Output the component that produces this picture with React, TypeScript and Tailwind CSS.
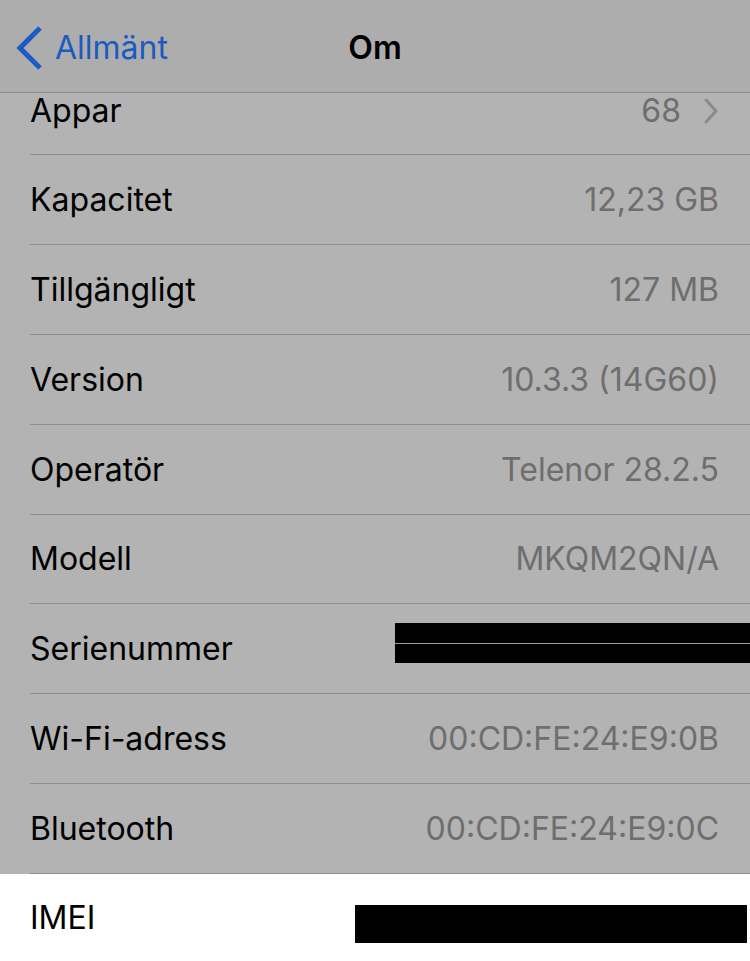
import React from "react";

const font = { fontFamily: "Inter, 'Noto Sans', 'Liberation Sans', sans-serif" };

function Row({ label, value }: { label: string; value: string }) {
  return (
    <div className="ml-[30px] h-[90px] flex items-center justify-between pr-[31px] pt-[1px] border-b border-[#8f8f8f]">
      <span className="text-[32px] text-black">{label}</span>
      <span className="text-[32px] text-[#6e6e6e]">{value}</span>
    </div>
  );
}

export default function App() {
  return (
    <div className="w-[750px] h-[961px] overflow-hidden bg-[#b3b3b3] flex flex-col" style={font}>
      <div className="h-[93px] shrink-0 bg-[#adadad] border-b border-[#8a8a8a] flex items-center relative">
        <div className="flex items-center pl-[14px] mt-[3px]">
          <svg width="30" height="46" viewBox="0 0 30 46" className="mr-[11px]">
            <path d="M26 3 L6 23 L26 43" fill="none" stroke="#1a5bc2" strokeWidth="5" strokeLinecap="butt" strokeLinejoin="miter" />
          </svg>
          <span className="text-[32px] text-[#1a5bc2]">Allmänt</span>
        </div>
        <div className="absolute left-0 right-0 top-0 h-[92px] flex items-center justify-center pointer-events-none">
          <span className="text-[32px] font-semibold text-black mt-[3px]">Om</span>
        </div>
      </div>
      <div className="ml-[30px] h-[62px] shrink-0 flex items-center justify-between pr-[31px] pb-[25px] border-b border-[#8f8f8f]">
        <span className="text-[32px] leading-[36px] text-black">Appar</span>
        <span className="flex items-center gap-[22px]">
          <span className="text-[32px] leading-[36px] text-[#6e6e6e]">68</span>
          <svg width="16" height="28" viewBox="0 0 16 28">
            <path d="M3 3 L13 14 L3 25" fill="none" stroke="#8a8a8a" strokeWidth="3" strokeLinecap="round" strokeLinejoin="round" />
          </svg>
        </span>
      </div>
      <Row label="Kapacitet" value="12,23 GB" />
      <Row label="Tillgängligt" value="127 MB" />
      <Row label="Version" value="10.3.3 (14G60)" />
      <Row label="Operatör" value="Telenor 28.2.5" />
      <Row label="Modell" value="MKQM2QN/A" />
      <div className="ml-[30px] h-[90px] flex items-center justify-between pt-[1px] border-b border-[#8f8f8f]">
        <span className="text-[32px] text-black">Serienummer</span>
        <div className="w-[355px] h-[40px] -mt-[13px] flex flex-col">
          <div className="h-[20px] bg-black" />
          <div className="h-[1px] bg-[#9a9a9a]" />
          <div className="h-[19px] bg-black" />
        </div>
      </div>
      <Row label="Wi-Fi-adress" value="00:CD:FE:24:E9:0B" />
      <Row label="Bluetooth" value="00:CD:FE:24:E9:0C" />
      <div className="flex-1 bg-white">
        <div className="ml-[30px] h-[87px] flex items-center justify-between pr-[3px]">
          <span className="text-[32px] text-black">IMEI</span>
          <div className="w-[392px] h-[38px] bg-black mt-[12px]" />
        </div>
      </div>
    </div>
  );
}
